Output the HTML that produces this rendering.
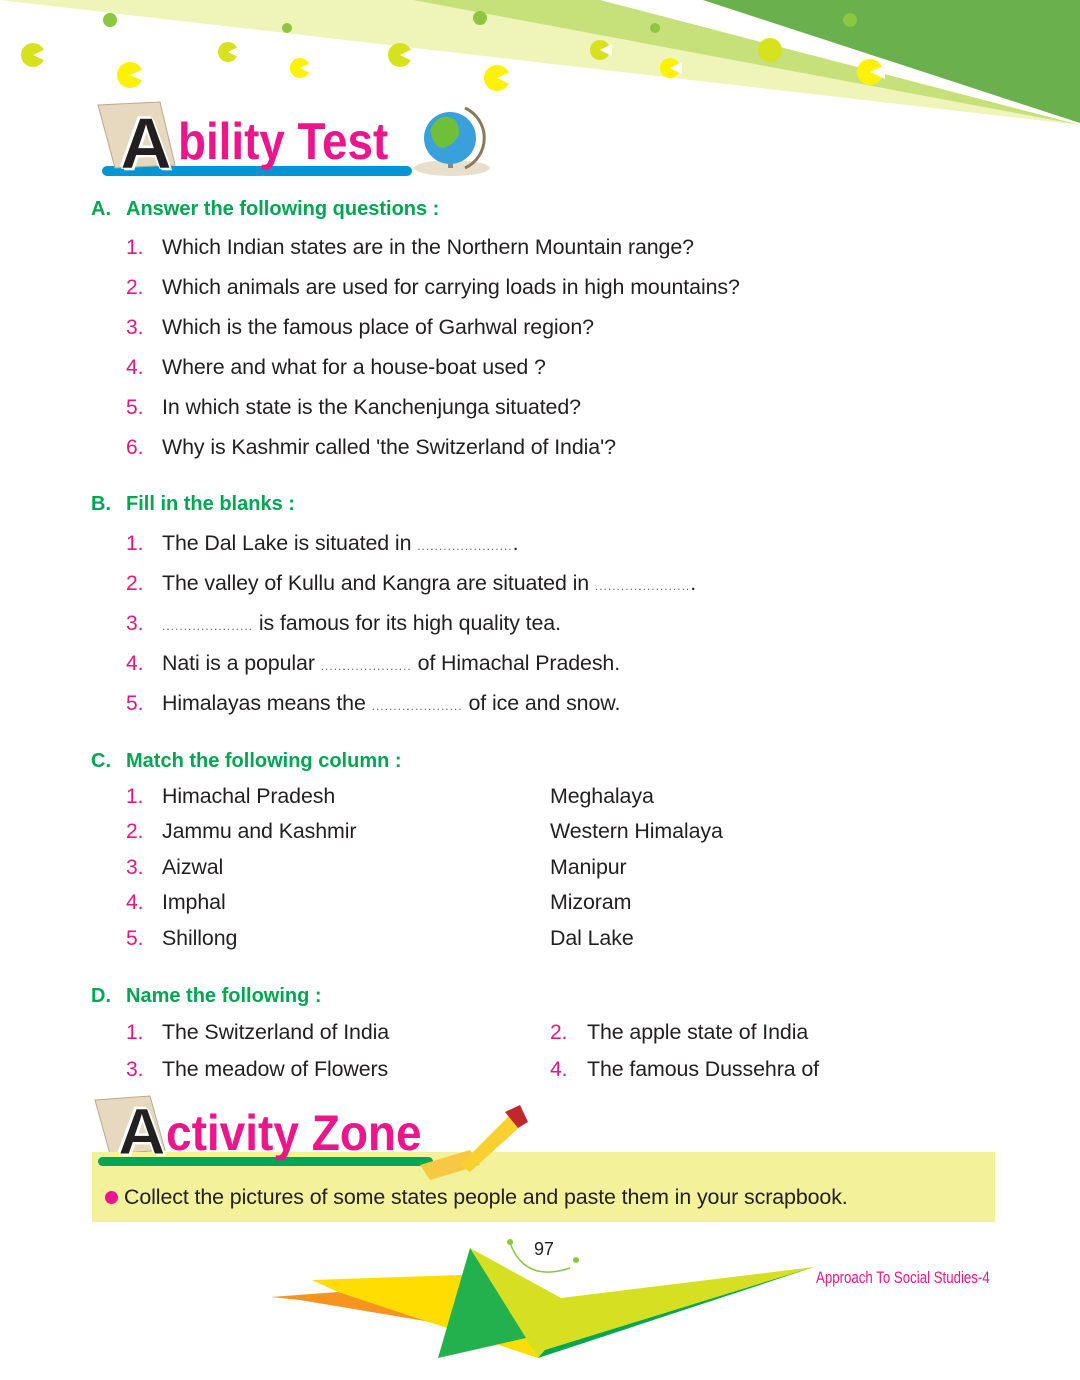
<!DOCTYPE html>
<html><head><meta charset="utf-8"><style>
body{margin:0;width:1080px;height:1380px;position:relative;background:#fff;font-family:"Liberation Sans",sans-serif;overflow:hidden}
.t{position:absolute;font-size:21.4px;color:#231f20;white-space:nowrap;line-height:1;letter-spacing:-0.1px}
.n{position:absolute;font-size:21px;color:#e5177e;line-height:1}
.h{position:absolute;font-size:20px;color:#00a651;font-weight:bold;line-height:1;white-space:nowrap}
.d{color:#666;font-size:12px;letter-spacing:1px}
.big{position:absolute;font:bold 72px "Liberation Sans",sans-serif;color:#231f20;line-height:1;-webkit-text-stroke:1px #fff;text-shadow:2px 2px 0 #fff,-2px -2px 0 #fff}
.pk{position:absolute;font:bold 52px "Liberation Sans Narrow","Liberation Sans",sans-serif;color:#ec168c;line-height:1;transform-origin:left;white-space:nowrap}
</style></head><body>
<svg width="1080" height="1380" style="position:absolute;left:0;top:0">
<polygon points="0,0 413,0 1080,125" fill="#eff4b8"/>
<polygon points="413,0 600,0 1080,125" fill="#c6e07a"/>
<polygon points="703,0 1080,0 1080,123" fill="#6ab04c"/>
<g fill="#d6e21e">
<circle cx="33" cy="55" r="12"/><circle cx="228" cy="52" r="10"/><circle cx="400" cy="55" r="12"/><circle cx="600" cy="50" r="10"/><circle cx="770" cy="50" r="12"/></g>
<g fill="#fff200"><circle cx="130" cy="75" r="13"/><circle cx="300" cy="68" r="10"/><circle cx="497" cy="78" r="13"/><circle cx="670" cy="68" r="10"/><circle cx="870" cy="72" r="13"/></g>
<g fill="#8dc63f"><circle cx="110" cy="20" r="7"/><circle cx="287" cy="28" r="5"/><circle cx="480" cy="18" r="7"/><circle cx="655" cy="28" r="5"/><circle cx="850" cy="20" r="7"/></g>
<g fill="#fff"><polygon points="33,55 48,48 48,62"/><polygon points="130,75 146,68 146,82"/><polygon points="228,52 240,46 240,58"/><polygon points="300,68 312,62 312,74"/><polygon points="400,55 414,48 414,62"/><polygon points="497,78 512,71 512,85"/><polygon points="600,50 612,44 612,56"/><polygon points="670,68 682,62 682,74"/><polygon points="870,72 885,65 885,79"/></g>
<rect x="102" y="166" width="310" height="10" rx="5" fill="#0096d6"/>
<polygon points="98,105 160,102 175,165 115,168" fill="#e6d9bf" stroke="#b9a98a"/>
<ellipse cx="452" cy="168" rx="38" ry="8" fill="#e8e0cc"/>
<rect x="448" y="150" width="5" height="18" fill="#888"/>
<circle cx="450" cy="138" r="26" fill="#3aa0dc"/><path d="M430,130 q10,-20 25,-10 q10,15 -5,25 q-15,10 -20,-15z" fill="#6fbf3a"/>
<path d="M465,108 a33,33 0 0 1 0,60" fill="none" stroke="#8a7a5a" stroke-width="3"/>
<polygon points="95,1100 150,1096 165,1150 110,1154" fill="#e6d9bf" stroke="#b9a98a"/>
<rect x="92" y="1152" width="903" height="70" fill="#f3f19a"/>
<rect x="98" y="1157" width="335" height="9" rx="4.5" fill="#00a651"/>
<polygon points="420,1165 470,1150 480,1165 430,1180" fill="#f7c942"/>
<polygon points="460,1165 510,1115 522,1125 470,1172" fill="#f8d030"/>
<polygon points="505,1112 520,1105 528,1122 518,1128" fill="#c1272d"/>
<polygon points="271,1297 338,1292 526,1338 300,1300" fill="#f7941d"/>
<polygon points="312,1280 461,1275 526,1338 538,1358 338,1292" fill="#ffdd00"/>
<polygon points="470,1248 561,1298 814,1267 538,1358" fill="#d7df23"/>
<polygon points="814,1267 538,1358 545,1350" fill="#00a651"/>
<polygon points="470,1248 438,1358 526,1338" fill="#22b14c"/>
<path d="M510,1243 q15,40 60,25" fill="none" stroke="#8dc63f" stroke-width="1.5"/>
<circle cx="510" cy="1242" r="3" fill="#8dc63f"/><circle cx="576" cy="1260" r="3" fill="#8dc63f"/>
</svg>
<div class="big" style="left:120px;top:108px">A</div>
<div class="pk" style="left:178px;top:116px;transform:scaleX(.88)">bility Test</div>
<div class="big" style="left:118px;top:1098px;font-size:66px">A</div>
<div class="pk" style="left:166px;top:1108px;font-size:50px;transform:scaleX(.92)">ctivity Zone</div>

<div class="h" style="left:91px;top:199px">A.</div><div class="h" style="left:126px;top:199px">Answer the following questions :</div>
<div class="n" style="left:126px;top:237px">1.</div><div class="t" style="left:162px;top:237px">Which Indian states are in the Northern Mountain range?</div>
<div class="n" style="left:126px;top:277px">2.</div><div class="t" style="left:162px;top:277px">Which animals are used for carrying loads in high mountains?</div>
<div class="n" style="left:126px;top:317px">3.</div><div class="t" style="left:162px;top:317px">Which is the famous place of Garhwal region?</div>
<div class="n" style="left:126px;top:357px">4.</div><div class="t" style="left:162px;top:357px">Where and what for a house-boat used ?</div>
<div class="n" style="left:126px;top:397px">5.</div><div class="t" style="left:162px;top:397px">In which state is the Kanchenjunga situated?</div>
<div class="n" style="left:126px;top:437px">6.</div><div class="t" style="left:162px;top:437px">Why is Kashmir called 'the Switzerland of India'?</div>

<div class="h" style="left:91px;top:494px">B.</div><div class="h" style="left:126px;top:494px">Fill in the blanks :</div>
<div class="n" style="left:126px;top:533px">1.</div><div class="t" style="left:162px;top:533px">The Dal Lake is situated in <span class="d">......................</span>.</div>
<div class="n" style="left:126px;top:573px">2.</div><div class="t" style="left:162px;top:573px">The valley of Kullu and Kangra are situated in <span class="d">......................</span>.</div>
<div class="n" style="left:126px;top:613px">3.</div><div class="t" style="left:162px;top:613px"><span class="d">.....................</span> is famous for its high quality tea.</div>
<div class="n" style="left:126px;top:653px">4.</div><div class="t" style="left:162px;top:653px">Nati is a popular <span class="d">.....................</span> of Himachal Pradesh.</div>
<div class="n" style="left:126px;top:693px">5.</div><div class="t" style="left:162px;top:693px">Himalayas means the <span class="d">.....................</span> of ice and snow.</div>

<div class="h" style="left:91px;top:751px">C.</div><div class="h" style="left:126px;top:751px">Match the following column :</div>
<div class="n" style="left:126px;top:786px">1.</div><div class="t" style="left:162px;top:786px">Himachal Pradesh</div><div class="t" style="left:550px;top:786px">Meghalaya</div>
<div class="n" style="left:126px;top:821px">2.</div><div class="t" style="left:162px;top:821px">Jammu and Kashmir</div><div class="t" style="left:550px;top:821px">Western Himalaya</div>
<div class="n" style="left:126px;top:857px">3.</div><div class="t" style="left:162px;top:857px">Aizwal</div><div class="t" style="left:550px;top:857px">Manipur</div>
<div class="n" style="left:126px;top:892px">4.</div><div class="t" style="left:162px;top:892px">Imphal</div><div class="t" style="left:550px;top:892px">Mizoram</div>
<div class="n" style="left:126px;top:928px">5.</div><div class="t" style="left:162px;top:928px">Shillong</div><div class="t" style="left:550px;top:928px">Dal Lake</div>

<div class="h" style="left:91px;top:986px">D.</div><div class="h" style="left:126px;top:986px">Name the following :</div>
<div class="n" style="left:126px;top:1022px">1.</div><div class="t" style="left:162px;top:1022px">The Switzerland of India</div>
<div class="n" style="left:550px;top:1022px">2.</div><div class="t" style="left:587px;top:1022px">The apple state of India</div>
<div class="n" style="left:126px;top:1059px">3.</div><div class="t" style="left:162px;top:1059px">The meadow of Flowers</div>
<div class="n" style="left:550px;top:1059px">4.</div><div class="t" style="left:587px;top:1059px">The famous Dussehra of</div>

<div style="position:absolute;left:105px;top:1191px;width:13px;height:13px;border-radius:50%;background:#ec168c"></div>
<div class="t" style="left:124px;top:1187px">Collect the pictures of some states people and paste them in your scrapbook.</div>
<div class="t" style="left:534px;top:1240px;font-size:18px">97</div>
<div style="position:absolute;left:816px;top:1268px;font:17px 'Liberation Sans Narrow','Liberation Sans',sans-serif;color:#ec168c;transform:scaleX(.78);transform-origin:left;white-space:nowrap">Approach To Social Studies-4</div>
</body></html>
